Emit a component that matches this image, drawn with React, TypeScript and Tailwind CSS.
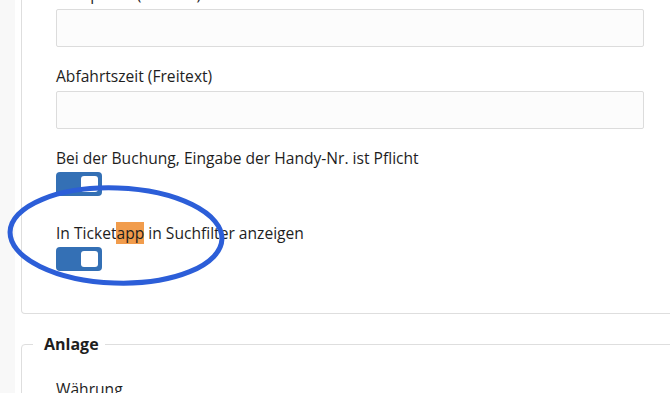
import { FunctionComponent } from "react";

const Toggle: FunctionComponent = () => (
  <div className="w-[46px] h-[24px] rounded-[4px] bg-[#3470b5] flex items-center justify-end pr-[4px]">
    <div className="w-[17px] h-[16px] rounded-[3px] bg-white" />
  </div>
);

const Field: FunctionComponent<{ label: string }> = ({ label }) => (
  <div>
    <div className="h-[20px] leading-[20px] mb-[5px]">{label}</div>
    <div className="w-[588px] h-[38px] border border-[#dcdcdc] bg-[#fcfcfc] rounded-[2px]" />
  </div>
);

const App: FunctionComponent = () => {
  return (
    <div
      className="relative w-full h-[393px] overflow-hidden bg-white flex text-[15.6px] text-[#1e1e1e]"
      style={{ fontFamily: "'Open Sans', Lato, sans-serif" }}
    >
      <div className="w-[15px] shrink-0 bg-[#f8f8f8]" />
      <div className="flex-1 -mt-[16px] pl-[6px]">
        <div className="-mr-6 border-l border-b border-r border-[#dedede] rounded-b-[4px] pl-[34px] pb-[42px]">
          <Field label="Treffpunkt (Freitext)" />
          <div className="mt-[19px]">
            <Field label="Abfahrtszeit (Freitext)" />
          </div>
          <div className="mt-[19px] h-[20px] leading-[20px]">Bei der Buchung, Eingabe der Handy-Nr. ist Pflicht</div>
          <div className="mt-[4px]">
            <Toggle />
          </div>
          <div className="mt-[27px] h-[20px] leading-[20px]">
            In Ticket<span className="bg-[#f19c4c]">app</span> in Suchfilter anzeigen
          </div>
          <div className="mt-[4px]">
            <Toggle />
          </div>
        </div>
        <fieldset className="-mr-6 mt-[20px] border border-[#dedede] rounded-tl-[4px] pb-4">
          <legend className="ml-[11px] pl-[11px] pr-[6px] text-[16px] font-bold leading-[20px]">Anlage</legend>
          <div className="pl-[34px] pt-[25px] h-[20px] leading-[20px] box-content">Währung</div>
        </fieldset>
      </div>
      <svg
        className="absolute left-0 top-0 pointer-events-none"
        width="670"
        height="393"
        viewBox="0 0 670 393"
      >
        <ellipse
          cx="116"
          cy="235.5"
          rx="106"
          ry="47.5"
          transform="rotate(2 116 235.5)"
          fill="none"
          stroke="#2c5ed8"
          strokeWidth="5"
        />
      </svg>
    </div>
  );
};

export default App;
